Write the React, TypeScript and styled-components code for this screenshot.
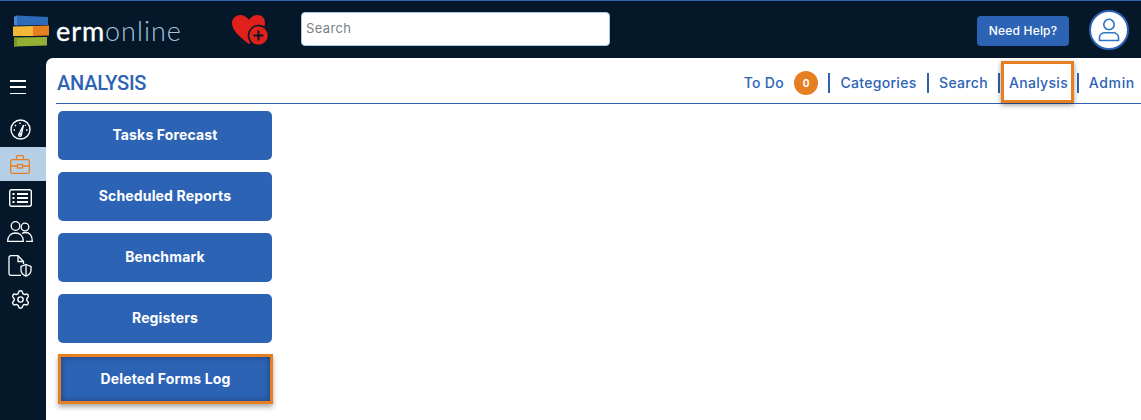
import { ReactElement } from 'react';
import styled, { createGlobalStyle } from 'styled-components';
import { Settings } from 'lucide-react';

const GlobalStyle = createGlobalStyle`
    html, body {
        margin: 0;
        padding: 0;
        background: #04182a;
        font-family: 'Inter', 'Liberation Sans', sans-serif;
    }
    * {
        box-sizing: border-box;
    }
`;

const Page = styled.div`
    width: 1141px;
    height: 420px;
    overflow: hidden;
    background: #04182a;
    border-top: 1px solid #2c63b5;
    display: flex;
    flex-direction: column;
`;

const Header = styled.header`
    height: 57px;
    flex: none;
    display: flex;
    align-items: center;
`;

const LogoWrap = styled.div`
    width: 231px;
    padding-left: 13px;
    flex: none;
    display: flex;
    align-items: center;
    gap: 7px;
    margin-top: 3px;
`;

const LogoText = styled.div`
    font-family: 'Lato', sans-serif;
    font-size: 27px;
    line-height: 32px;
    color: #a5c3dc;
    font-weight: 300;
    letter-spacing: 1px;

    b {
        color: #fff;
        font-weight: 400;
        letter-spacing: 0.9px;
        -webkit-text-stroke: 0.35px #fff;
    }
`;

const HeartWrap = styled.div`
    width: 70px;
    flex: none;
    display: flex;
    margin-top: 2px;
`;

const SearchBox = styled.input`
    width: 309px;
    height: 34px;
    flex: none;
    margin-top: -1px;
    border: 1px solid #a9c8e6;
    border-radius: 4px;
    background: #fff;
    padding: 0 4px 2px;
    font-family: 'Inter', sans-serif;
    font-size: 13px;
    letter-spacing: 0.35px;
    outline: none;

    &::placeholder {
        color: #7a7f85;
        opacity: 1;
    }
`;

const HeaderRight = styled.div`
    margin-left: auto;
    padding-right: 12px;
    display: flex;
    align-items: center;
    gap: 20px;
`;

const HelpButton = styled.button`
    width: 92px;
    height: 30px;
    border: 0;
    border-radius: 4px;
    margin-top: 3px;
    background: #2c63b5;
    color: #fff;
    font-family: 'Inter', sans-serif;
    font-size: 12px;
    font-weight: 500;
    letter-spacing: 0.2px;
    padding: 0 0 2px;
`;

const Avatar = styled.div`
    width: 40px;
    height: 40px;
    border-radius: 50%;
    background: #fff;
    border: 2px solid #2c63b5;
    display: flex;
    align-items: center;
    justify-content: center;
`;

const Body = styled.div`
    flex: 1;
    display: flex;
    min-height: 0;
`;

const Sidebar = styled.nav`
    width: 46px;
    flex: none;
    display: flex;
    flex-direction: column;
    padding-top: 22px;
`;

const Burger = styled.div`
    height: 14px;
    width: 16px;
    margin: 0 0 18px 10px;
    display: flex;
    flex-direction: column;
    justify-content: space-between;

    span {
        height: 1.5px;
        background: #fff;
    }
`;

const SideItem = styled.div<{ $active?: boolean; $h: number }>`
    height: ${p => p.$h}px;
    width: 46px;
    display: flex;
    align-items: center;
    justify-content: center;
    padding-right: 6px;
    color: ${p => (p.$active ? '#e67e22' : '#fff')};
    background: ${p => (p.$active ? '#b5cfe6' : 'transparent')};
`;

const Main = styled.main`
    flex: 1;
    background: #fff;
    border-top-left-radius: 7px;
    min-width: 0;
    padding-left: 10px;
`;

const TitleBar = styled.div`
    height: 46px;
    border-bottom: 1px solid #2c63b5;
    display: flex;
    align-items: center;
    justify-content: space-between;
    padding-top: 5px;
`;

const Title = styled.h1`
    margin: 0 0 0 1px;
    font-family: 'Roboto', sans-serif;
    font-size: 20px;
    font-weight: 500;
    letter-spacing: -0.25px;
    color: #2c63b5;
`;

const Tabs = styled.div`
    display: flex;
    align-items: center;
    padding-right: 6px;
`;

const Tab = styled.a<{ $marked?: boolean; $w: number }>`
    width: ${p => p.$w}px;
    color: #2c63b5;
    font-size: 14px;
    font-weight: 500;
    letter-spacing: 0.3px;
    line-height: 20px;
    white-space: nowrap;
    text-align: center;
    border-right: 2px solid #2c63b5;
    position: relative;

    &:last-child {
        border-right: 0;
        text-align: right;
        letter-spacing: 0.7px;
    }

    ${p =>
        p.$marked &&
        `&::after {
            content: '';
            position: absolute;
            left: 1px;
            right: 3px;
            top: -12px;
            bottom: -10px;
            border: 3px solid #e67e22;
            box-shadow: 0 2px 5px rgba(0, 0, 0, 0.4);
        }`}
`;

const Badge = styled.span`
    display: inline-flex;
    width: 24px;
    height: 24px;
    border-radius: 50%;
    background: #e67e22;
    color: #fff;
    font-size: 10px;
    font-weight: 700;
    letter-spacing: 0;
    align-items: center;
    justify-content: center;
    margin-left: 10px;
    vertical-align: middle;
`;

const TodoTab = styled(Tab)`
    display: flex;
    align-items: center;
    justify-content: flex-end;
    padding-right: 10px;
    line-height: 24px;
    height: 20px;
`;

const ButtonList = styled.div`
    display: flex;
    flex-direction: column;
    gap: 12px;
    width: 214px;
    margin: 7px 0 0 2px;
`;

const ActionButton = styled.button<{ $marked?: boolean }>`
    height: ${p => (p.$marked ? '50px' : '49px')};
    margin-top: ${p => (p.$marked ? '-1px' : '0')};
    width: ${p => (p.$marked ? '215px' : '214px')};
    border: ${p => (p.$marked ? '3px solid #e67e22' : '0')};
    border-radius: ${p => (p.$marked ? '0' : '5px')};
    background: #2c63b5;
    color: #fff;
    font-family: 'Inter', sans-serif;
    font-size: 14px;
    font-weight: 700;
    letter-spacing: 0.15px;
    padding: 0 0 2px;
    box-shadow: ${p =>
        p.$marked
            ? '0 3px 5px rgba(0, 0, 0, 0.35), inset 0 0 6px rgba(0, 0, 0, 0.35)'
            : 'none'};
`;

function Logo(): ReactElement {
    return (
        <svg width='36' height='32' viewBox='0 0 36 32'>
            <path d='M1 2 L4 0.500 L35 2 L35 10 L4 10.500 L1 10 Z' fill='#2c6bb8' />
            <path d='M1 2 L4 0.500 L4 10.500 L1 10 Z' fill='#4a86cc' />
            <path d='M0 11.500 L20 11 L20 21 L0 21 Z' fill='#f2b83a' />
            <path d='M20 11 L36 10.500 L36 20.500 L20 21 Z' fill='#e67e22' />
            <path d='M1 22.500 L34 22 L34 30.500 L1 31.500 Z' fill='#94b034' />
            <path d='M1 22.500 L4 22.400 L4 31.400 L1 31.500 Z' fill='#7c9628' />
        </svg>
    );
}

function HeartPlus(): ReactElement {
    return (
        <svg width='38' height='31' viewBox='0 0 38 31'>
            <path
                d='M18 29 C10 23 1 16 1 8 C1 3 5 0 9.500 0 C13 0 16 2 18 5 C20 2 23 0 26.500 0 C31 0 34 3 34 8 C34 16 26 23 18 29 Z'
                fill='#e0201b'
            />
            <circle cx='27.500' cy='20.500' r='10' fill='#e0201b' stroke='#04182a' strokeWidth='1.500' />
            <path d='M27.500 15.500 V25.500 M22.500 20.500 H32.500' stroke='#04182a' strokeWidth='2' />
        </svg>
    );
}

function Gauge(): ReactElement {
    return (
        <svg width='21' height='21' viewBox='0 0 21 21' fill='none' stroke='currentColor' strokeWidth='1.400'>
            <circle cx='10.500' cy='10.500' r='9.500' />
            <path d='M8.800 15.500 L13.500 6 L11.200 16.500' strokeWidth='1.300' />
            <circle cx='10' cy='16' r='1.300' />
            <path d='M3.500 11 H5 M5 6 L6 7 M10 3.500 V5 M16 11 H17.500 M15.800 6 L15 6.800' />
        </svg>
    );
}

function Briefcase(): ReactElement {
    return (
        <svg width='20' height='19' viewBox='0 0 20 19' fill='none' stroke='currentColor' strokeWidth='1.300'>
            <rect x='0.700' y='4.700' width='18.600' height='13.600' rx='1.500' />
            <path d='M6.500 4.500 V1.700 Q6.500 0.700 7.500 0.700 H12.500 Q13.500 0.700 13.500 1.700 V4.500' />
            <path d='M0.700 11 H7.500 M12.500 11 H19.300' />
            <rect x='7.500' y='9.500' width='5' height='3.500' />
        </svg>
    );
}

function CardList(): ReactElement {
    return (
        <svg width='23' height='18' viewBox='0 0 23 18' fill='none' stroke='currentColor' strokeWidth='1.400'>
            <rect x='0.700' y='0.700' width='21.600' height='16.600' rx='2' />
            <path d='M8 5 H19 M8 9 H19 M8 13 H19' strokeWidth='2' />
            <path d='M3.500 5 H5.500 M3.500 9 H5.500 M3.500 13 H5.500' strokeWidth='2' />
        </svg>
    );
}

function Users(): ReactElement {
    return (
        <svg width='26' height='21' viewBox='0 0 26 21' fill='none' stroke='currentColor' strokeWidth='1.300'>
            <circle cx='8.500' cy='5' r='4.300' />
            <circle cx='18' cy='6' r='3.800' />
            <path d='M0.700 20.300 C0.700 15 4 12 8.500 12 C13 12 16.300 15 16.300 20.300 Z' />
            <path d='M15 12.500 C16 11.800 17 11.500 18.500 11.500 C22.500 11.500 25.300 14.500 25.300 20.300 H19' />
        </svg>
    );
}

function FileShield(): ReactElement {
    return (
        <svg width='24' height='22' viewBox='0 0 24 22' fill='none' stroke='currentColor' strokeWidth='1.300'>
            <path d='M13 20.300 H3 Q1 20.300 1 18.300 V2.700 Q1 0.700 3 0.700 H10 L15.500 6.500 V9' />
            <path d='M10 0.700 V6.500 H15.500' />
            <path d='M18 9.500 L23 11.500 V15 C23 18 21 20 18 21.200 C15 20 13 18 13 15 V11.500 Z' />
            <path d='M18 9.500 V21' />
        </svg>
    );
}

function UserOutline(): ReactElement {
    return (
        <svg width='22' height='24' viewBox='0 0 22 24' fill='none' stroke='#2c74c4' strokeWidth='1.600'>
            <circle cx='11' cy='6.500' r='5.200' />
            <path d='M1.500 22.500 V19.500 C1.500 16.500 4 14.800 7 14.800 H15 C18 14.800 20.500 16.500 20.500 19.500 V22.500 Z' />
        </svg>
    );
}

export default function App(): ReactElement {
    return (
        <Page>
            <GlobalStyle />
            <Header>
                <LogoWrap>
                    <Logo />
                    <LogoText>
                        <b>erm</b>online
                    </LogoText>
                </LogoWrap>
                <HeartWrap>
                    <HeartPlus />
                </HeartWrap>
                <SearchBox placeholder='Search' />
                <HeaderRight>
                    <HelpButton>Need Help?</HelpButton>
                    <Avatar>
                        <UserOutline />
                    </Avatar>
                </HeaderRight>
            </Header>
            <Body>
                <Sidebar>
                    <Burger>
                        <span />
                        <span />
                        <span />
                    </Burger>
                    <SideItem $h={35}>
                        <Gauge />
                    </SideItem>
                    <SideItem $h={34} $active>
                        <Briefcase />
                    </SideItem>
                    <SideItem $h={33}>
                        <CardList />
                    </SideItem>
                    <SideItem $h={35}>
                        <Users />
                    </SideItem>
                    <SideItem $h={33}>
                        <FileShield />
                    </SideItem>
                    <SideItem $h={34}>
                        <Settings size={21} strokeWidth={1.6} />
                    </SideItem>
                </Sidebar>
                <Main>
                    <TitleBar>
                        <Title>ANALYSIS</Title>
                        <Tabs>
                            <TodoTab $w={96}>
                                To Do<Badge>0</Badge>
                            </TodoTab>
                            <Tab $w={99}>Categories</Tab>
                            <Tab $w={71}>Search</Tab>
                            <Tab $w={79} $marked>
                                Analysis
                            </Tab>
                            <Tab $w={56}>Admin</Tab>
                        </Tabs>
                    </TitleBar>
                    <ButtonList>
                        <ActionButton>Tasks Forecast</ActionButton>
                        <ActionButton>Scheduled Reports</ActionButton>
                        <ActionButton>Benchmark</ActionButton>
                        <ActionButton>Registers</ActionButton>
                        <ActionButton $marked>Deleted Forms Log</ActionButton>
                    </ButtonList>
                </Main>
            </Body>
        </Page>
    );
}
